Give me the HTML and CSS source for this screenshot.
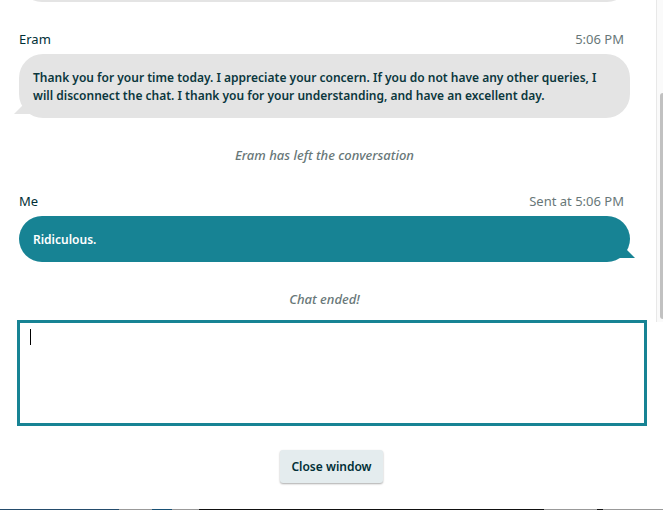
FILE: index.html
```html
<!DOCTYPE html>
<html lang="en">
<head>
<meta charset="utf-8">
<meta name="viewport" content="width=device-width, initial-scale=1">
<title>Chat</title>
<link rel="stylesheet" href="styles.css">
</head>
<body>
<div class="chat">
  <main class="history">
    <div class="log">
      <div class="bubble bubble-agent"></div>
      <section class="message">
        <header class="meta"><span class="sender">Eram</span><span class="time">5:06 PM</span></header>
        <p class="bubble bubble-agent">Thank you for your time today. I appreciate your concern. If you do not have any other queries, I will disconnect the chat. I thank you for your understanding, and have an excellent day.
          <svg class="tail tail-left" viewBox="0 0 18 9" aria-hidden="true"><path d="M0 9L9 0L18 9Z"/></svg>
        </p>
      </section>
      <p class="notice">Eram has left the conversation</p>
      <section class="message">
        <header class="meta"><span class="sender">Me</span><span class="time">Sent at 5:06 PM</span></header>
        <p class="bubble bubble-me">Ridiculous.
          <svg class="tail tail-right" viewBox="0 0 18 9" aria-hidden="true"><path d="M0 9L9 0L18 9Z"/></svg>
        </p>
      </section>
      <p class="notice">Chat ended!</p>
    </div>
    <div class="scrollbar"><div class="thumb"></div></div>
  </main>
  <div class="composer">
    <textarea class="input" aria-label="Message"></textarea>
    <span class="caret"></span>
  </div>
  <footer class="actions"><button class="close" type="button">Close window</button></footer>
  <div class="edge"></div>
</div>
</body>
</html>
```
FILE: styles.css
```css
* { box-sizing: border-box; }

body {
  margin: 0;
  background: #fff;
  color: #002f36;
  font: 400 13px/18px "Noto Sans", "Open Sans", sans-serif;
}

p { margin: 0; }

.chat {
  display: flex;
  flex-direction: column;
  height: 100vh;
}

.history {
  display: flex;
  flex: 1;
  min-height: 0;
  overflow: hidden;
}

.log {
  display: flex;
  flex: 1;
  flex-direction: column;
  justify-content: flex-end;
  gap: 28px;
  min-width: 0;
  padding: 0 26px 14px 19px;
}

.meta {
  display: flex;
  justify-content: space-between;
  padding-right: 6px;
  margin-bottom: 6px;
}

.time { color: #687778; }

.bubble {
  position: relative;
  flex-shrink: 0;
  min-height: 46px;
  padding: 15px 28px 13px 14px;
  border-radius: 24px;
  font-size: 12px;
  font-weight: 600;
}

.bubble-agent {
  background: #e4e4e4;
  color: #0b373d;
}

.bubble-me {
  background: #178394;
  color: #fff;
}

.tail {
  position: absolute;
  bottom: 4px;
  width: 18px;
  height: 9px;
}

.tail-left { left: -5px; fill: #e4e4e4; }
.tail-right { right: -5px; fill: #178394; }

.notice {
  color: #687778;
  font-style: italic;
  font-weight: 500;
  text-align: center;
}

.scrollbar {
  display: flex;
  flex-direction: column;
  justify-content: flex-end;
  width: 7px;
  padding: 0 0 3px 3px;
  border-left: 1px solid #e8e8e8;
  background: #fafafa;
}

.thumb {
  height: 71%;
  border-radius: 4px 0 0 4px;
  background: #c1c1c1;
}

.composer {
  position: relative;
  margin: -2px 16px 0 17px;
}

.input {
  display: block;
  width: 100%;
  height: 106px;
  padding: 6px 10px;
  border: 3px solid #178394;
  outline: none;
  background: #fff;
  color: inherit;
  font: inherit;
  resize: none;
}

.caret {
  position: absolute;
  top: 9px;
  left: 13px;
  width: 1px;
  height: 16px;
  background: #000;
}

.actions {
  display: flex;
  justify-content: center;
  padding: 24px 0 26px;
}

.close {
  height: 33px;
  padding: 0 11px;
  border: 0;
  border-radius: 3px;
  background: #e4ecee;
  box-shadow: 0 1px 2px #0005;
  color: inherit;
  font: inherit;
  font-size: 12px;
  font-weight: 600;
}

.edge {
  height: 1px;
  background: linear-gradient(90deg, #244c6c 18%, #999 18% 23%, #185074 23% 26%, #999 26% 30%, #111 30% 82%, #999 82% 90%, #111 90% 91%, #999 91%);
}
```
